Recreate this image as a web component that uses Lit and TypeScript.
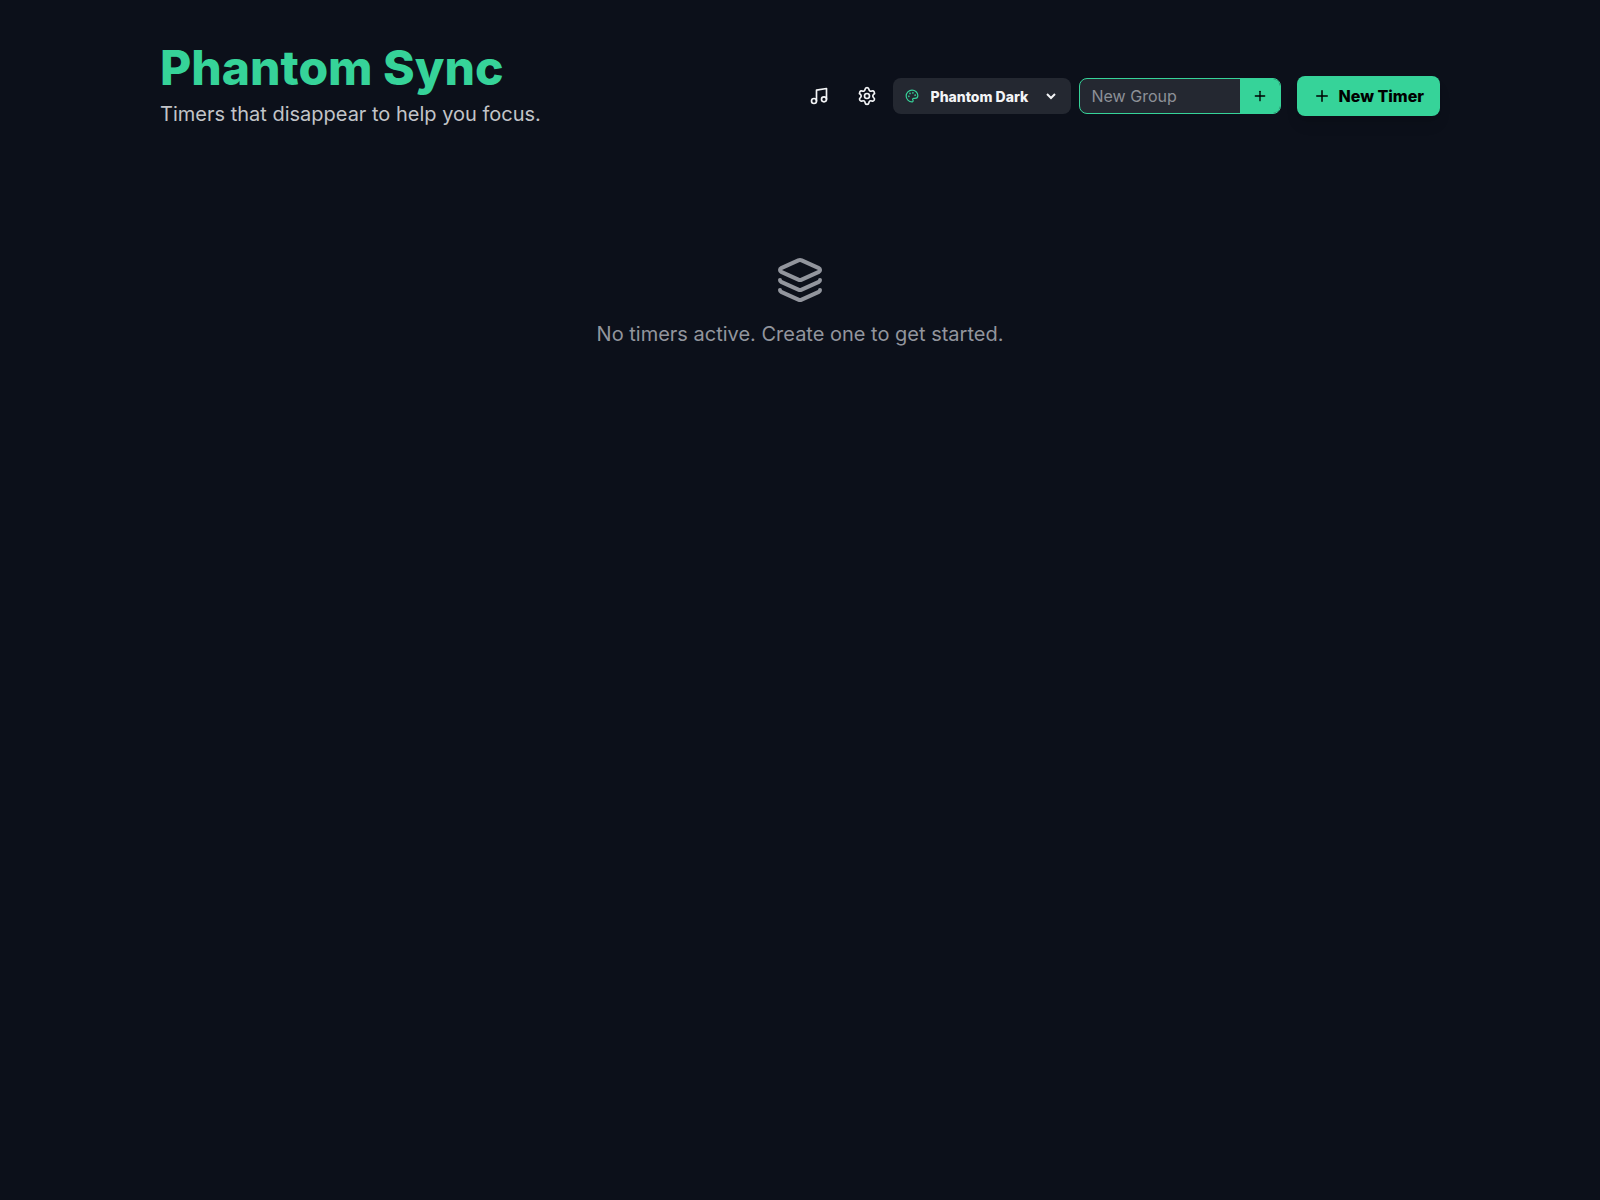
import { LitElement, html, css, svg } from "lit";
import { customElement } from "lit/decorators.js";

const icon = (size: number, body: unknown) => html`<svg
  width=${size}
  height=${size}
  viewBox="0 0 24 24"
  fill="none"
  stroke="currentColor"
  stroke-width="2"
  stroke-linecap="round"
  stroke-linejoin="round"
  aria-hidden="true"
>${body}</svg>`;

const music = svg`<path d="M9 18V5l12-2v13" /><circle cx="6" cy="18" r="3" /><circle cx="18" cy="16" r="3" />`;
const settings = svg`<path d="M9.671 4.136a2.34 2.34 0 0 1 4.659 0 2.34 2.34 0 0 0 3.319 1.915 2.34 2.34 0 0 1 2.33 4.033 2.34 2.34 0 0 0 0 3.831 2.34 2.34 0 0 1-2.33 4.033 2.34 2.34 0 0 0-3.319 1.915 2.34 2.34 0 0 1-4.659 0 2.34 2.34 0 0 0-3.32-1.915 2.34 2.34 0 0 1-2.33-4.033 2.34 2.34 0 0 0 0-3.831A2.34 2.34 0 0 1 6.35 6.051a2.34 2.34 0 0 0 3.319-1.915" /><circle cx="12" cy="12" r="3" />`;
const palette = svg`<path d="M12 22a1 1 0 0 1 0-20 10 9 0 0 1 10 9 5 5 0 0 1-5 5h-2.25a1.75 1.75 0 0 0-1.4 2.8l.3.4a1.75 1.75 0 0 1-1.4 2.8z" /><circle cx="13.5" cy="6.5" r=".5" fill="currentColor" /><circle cx="17.5" cy="10.5" r=".5" fill="currentColor" /><circle cx="6.5" cy="12.5" r=".5" fill="currentColor" /><circle cx="8.5" cy="7.5" r=".5" fill="currentColor" />`;
const plus = svg`<path d="M5 12h14" /><path d="M12 5v14" />`;
const layers = svg`<path d="M12.83 2.18a2 2 0 0 0-1.66 0L2.6 6.08a1 1 0 0 0 0 1.83l8.58 3.91a2 2 0 0 0 1.66 0l8.58-3.9a1 1 0 0 0 0-1.83z" /><path d="M2 12a1 1 0 0 0 .58.91l8.6 3.91a2 2 0 0 0 1.65 0l8.58-3.9A1 1 0 0 0 22 12" /><path d="M2 17a1 1 0 0 0 .58.91l8.6 3.91a2 2 0 0 0 1.65 0l8.58-3.9A1 1 0 0 0 22 17" />`;

@customElement("app-root")
export class AppRoot extends LitElement {
  static styles = css`
    :host {
      --bg: #0c101a;
      --surface: #242831;
      --primary: #36d399;
      --text: #f3f4f6;
      display: block;
      min-height: 100vh;
      box-sizing: border-box;
      padding: 40px 32px;
      background: var(--bg);
      color: var(--text);
      font-family: Inter, "Liberation Sans", sans-serif;
      font-size: 16px;
      line-height: 24px;
    }
    * {
      box-sizing: border-box;
    }
    button,
    input,
    select {
      font: inherit;
      color: inherit;
      margin: 0;
      border: 0;
      background: transparent;
    }
    button {
      cursor: pointer;
    }
    svg {
      display: block;
      flex: none;
    }
    .container {
      max-width: 1280px;
      margin: 0 auto;
    }
    header {
      display: flex;
      flex-wrap: wrap;
      justify-content: space-between;
      align-items: flex-end;
      gap: 16px;
      margin-bottom: 80px;
    }
    h1 {
      margin: 0;
      font-size: 48px;
      line-height: 56px;
      font-weight: 800;
      color: var(--primary);
    }
    .tagline {
      margin: 4px 0 0;
      font-size: 20px;
      line-height: 28px;
      color: #c2c4c8;
    }
    .controls {
      display: flex;
      flex-wrap: wrap;
      align-items: center;
      gap: 8px;
      padding-bottom: 12px;
    }
    .tools {
      display: flex;
      gap: 12px;
    }
    .icon-button {
      padding: 8px;
      border-radius: 8px;
    }
    .theme {
      display: flex;
      align-items: center;
      gap: 8px;
      height: 36px;
      padding: 0 12px;
      border-radius: 8px;
      background: var(--surface);
    }
    .theme svg {
      color: var(--primary);
    }
    .theme select {
      width: 132px;
      height: 24px;
      font-size: 14px;
      font-weight: 800;
    }
    .theme option {
      background: var(--surface);
    }
    .group {
      display: flex;
      height: 36px;
      border: 1px solid var(--primary);
      border-radius: 8px;
      overflow: hidden;
      background: var(--surface);
    }
    .group input {
      width: 160px;
      padding: 0 12px;
      outline: none;
    }
    .group input::placeholder {
      color: #8d9097;
      opacity: 1;
    }
    .group button {
      padding: 0 12px;
      background: var(--primary);
      color: #000;
    }
    .new-timer {
      display: flex;
      align-items: center;
      gap: 8px;
      height: 40px;
      margin-left: 8px;
      padding: 0 16px;
      border-radius: 8px;
      background: var(--primary);
      color: #000;
      font-weight: 800;
      box-shadow: 0 10px 15px -3px rgb(0 0 0 / 0.1), 0 4px 6px -4px rgb(0 0 0 / 0.1);
    }
    .empty {
      display: flex;
      flex-direction: column;
      align-items: center;
      gap: 16px;
      padding-top: 48px;
      text-align: center;
      font-size: 20px;
      line-height: 28px;
      color: #92959d;
    }
    .empty p {
      margin: 0;
    }
  `;

  render() {
    return html`
      <div class="container">
        <header>
          <div>
            <h1>Phantom Sync</h1>
            <p class="tagline">Timers that disappear to help you focus.</p>
          </div>
          <div class="controls">
            <div class="tools">
              <button class="icon-button" type="button" aria-label="Music">${icon(20, music)}</button>
              <button class="icon-button" type="button" aria-label="Settings">${icon(20, settings)}</button>
            </div>
            <label class="theme">
              ${icon(14, palette)}
              <select aria-label="Theme">
                <option>Phantom Dark</option>
              </select>
            </label>
            <form class="group" @submit=${(e: Event) => e.preventDefault()}>
              <input type="text" placeholder="New Group" aria-label="New Group" />
              <button type="submit" aria-label="Add group">${icon(16, plus)}</button>
            </form>
            <button class="new-timer" type="button">${icon(18, plus)}New Timer</button>
          </div>
        </header>
        <main class="empty">
          ${icon(48, layers)}
          <p>No timers active. Create one to get started.</p>
        </main>
      </div>
    `;
  }
}
